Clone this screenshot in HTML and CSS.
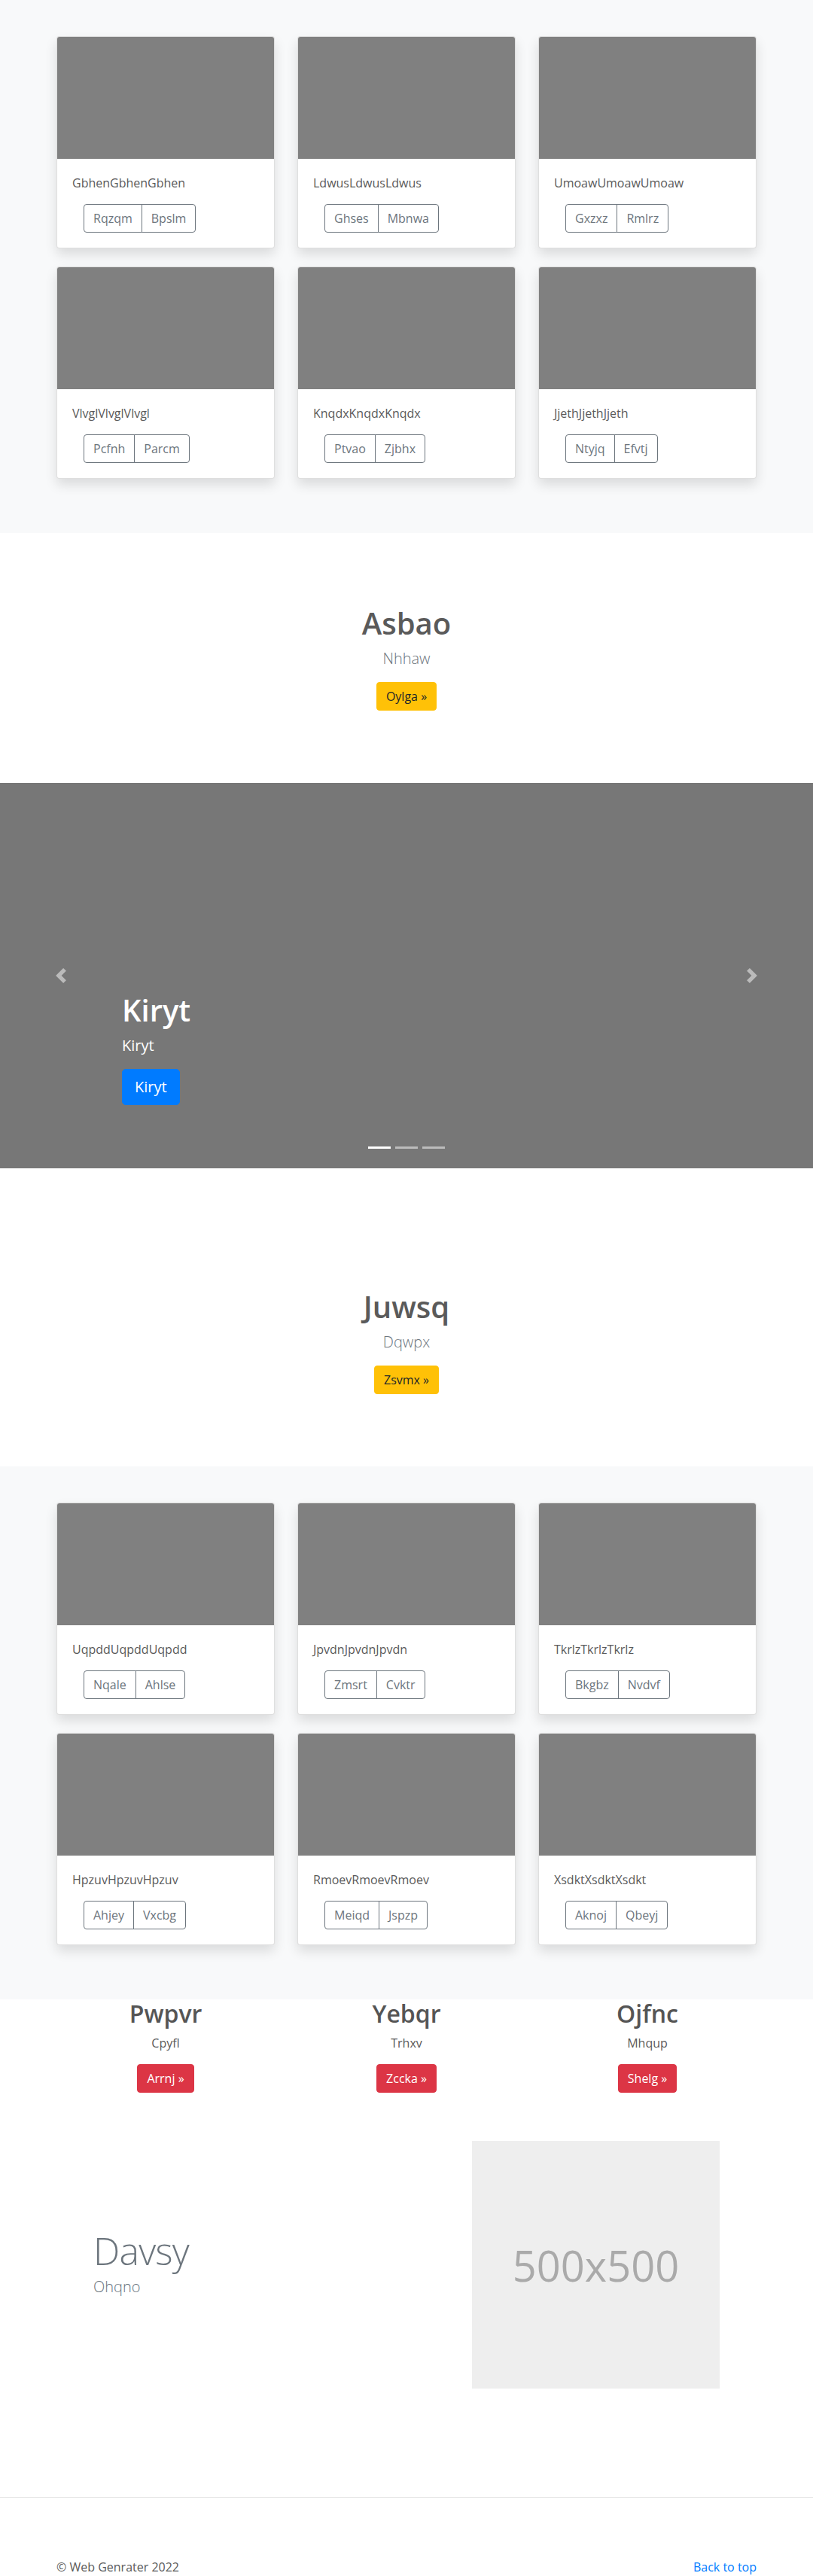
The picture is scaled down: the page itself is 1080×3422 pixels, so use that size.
FILE: index.html
```html
<!DOCTYPE html>
<html lang="en">
<head>
<meta charset="utf-8">
<title>Web Genrater</title>
<link rel="stylesheet" href="styles.css">
</head>
<body>

<section class="album">
  <div class="container card-grid">
    <div class="card"><div class="card-img"></div><div class="card-body"><p class="card-text">GbhenGbhenGbhen</p><div class="btn-group"><button class="btn btn-outline">Rqzqm</button><button class="btn btn-outline">Bpslm</button></div></div></div>
    <div class="card"><div class="card-img"></div><div class="card-body"><p class="card-text">LdwusLdwusLdwus</p><div class="btn-group"><button class="btn btn-outline">Ghses</button><button class="btn btn-outline">Mbnwa</button></div></div></div>
    <div class="card"><div class="card-img"></div><div class="card-body"><p class="card-text">UmoawUmoawUmoaw</p><div class="btn-group"><button class="btn btn-outline">Gxzxz</button><button class="btn btn-outline">Rmlrz</button></div></div></div>
    <div class="card"><div class="card-img"></div><div class="card-body"><p class="card-text">VlvglVlvglVlvgl</p><div class="btn-group"><button class="btn btn-outline">Pcfnh</button><button class="btn btn-outline">Parcm</button></div></div></div>
    <div class="card"><div class="card-img"></div><div class="card-body"><p class="card-text">KnqdxKnqdxKnqdx</p><div class="btn-group"><button class="btn btn-outline">Ptvao</button><button class="btn btn-outline">Zjbhx</button></div></div></div>
    <div class="card"><div class="card-img"></div><div class="card-body"><p class="card-text">JjethJjethJjeth</p><div class="btn-group"><button class="btn btn-outline">Ntyjq</button><button class="btn btn-outline">Efvtj</button></div></div></div>
  </div>
</section>

<section class="jumbo">
  <h1 class="jumbo-title">Asbao</h1>
  <p class="lead">Nhhaw</p>
  <a class="btn btn-warning" href="#">Oylga »</a>
</section>

<div class="carousel">
  <ol class="indicators">
    <li class="active"></li>
    <li></li>
    <li></li>
  </ol>
  <div class="caption">
    <h1 class="caption-title">Kiryt</h1>
    <p class="caption-text">Kiryt</p>
    <p class="caption-action"><a class="btn btn-lg btn-primary" href="#">Kiryt</a></p>
  </div>
  <a class="control control-prev" href="#"><svg class="control-icon" viewBox="0 0 8 8"><path fill="#fff" d="M5.25 0l-4 4 4 4 1.5-1.5L4.25 4l2.5-2.5L5.25 0z"/></svg></a>
  <a class="control control-next" href="#"><svg class="control-icon" viewBox="0 0 8 8"><path fill="#fff" d="M2.75 0l-1.5 1.5L3.75 4l-2.5 2.5L2.75 8l4-4-4-4z"/></svg></a>
</div>

<section class="jumbo">
  <h1 class="jumbo-title">Juwsq</h1>
  <p class="lead">Dqwpx</p>
  <a class="btn btn-warning" href="#">Zsvmx »</a>
</section>

<section class="album">
  <div class="container card-grid">
    <div class="card"><div class="card-img"></div><div class="card-body"><p class="card-text">UqpddUqpddUqpdd</p><div class="btn-group"><button class="btn btn-outline">Nqale</button><button class="btn btn-outline">Ahlse</button></div></div></div>
    <div class="card"><div class="card-img"></div><div class="card-body"><p class="card-text">JpvdnJpvdnJpvdn</p><div class="btn-group"><button class="btn btn-outline">Zmsrt</button><button class="btn btn-outline">Cvktr</button></div></div></div>
    <div class="card"><div class="card-img"></div><div class="card-body"><p class="card-text">TkrlzTkrlzTkrlz</p><div class="btn-group"><button class="btn btn-outline">Bkgbz</button><button class="btn btn-outline">Nvdvf</button></div></div></div>
    <div class="card"><div class="card-img"></div><div class="card-body"><p class="card-text">HpzuvHpzuvHpzuv</p><div class="btn-group"><button class="btn btn-outline">Ahjey</button><button class="btn btn-outline">Vxcbg</button></div></div></div>
    <div class="card"><div class="card-img"></div><div class="card-body"><p class="card-text">RmoevRmoevRmoev</p><div class="btn-group"><button class="btn btn-outline">Meiqd</button><button class="btn btn-outline">Jspzp</button></div></div></div>
    <div class="card"><div class="card-img"></div><div class="card-body"><p class="card-text">XsdktXsdktXsdkt</p><div class="btn-group"><button class="btn btn-outline">Aknoj</button><button class="btn btn-outline">Qbeyj</button></div></div></div>
  </div>
</section>

<section class="container features">
  <div class="feature">
    <h2 class="feature-title">Pwpvr</h2>
    <p class="feature-text">Cpyfl</p>
    <a class="btn btn-danger" href="#">Arrnj »</a>
  </div>
  <div class="feature">
    <h2 class="feature-title">Yebqr</h2>
    <p class="feature-text">Trhxv</p>
    <a class="btn btn-danger" href="#">Zccka »</a>
  </div>
  <div class="feature">
    <h2 class="feature-title">Ojfnc</h2>
    <p class="feature-text">Mhqup</p>
    <a class="btn btn-danger" href="#">Shelg »</a>
  </div>
</section>

<section class="container featurette">
  <div class="featurette-text">
    <h2 class="featurette-heading">Davsy</h2>
    <p class="featurette-lead">Ohqno</p>
  </div>
  <div class="placeholder">500x500</div>
</section>

<hr class="divider">

<footer class="container footer">
  <p class="footer-copy">© Web Genrater 2022</p>
  <a class="footer-link" href="#">Back to top</a>
</footer>

</body>
</html>
```

FILE: styles.css
```css
* { box-sizing: border-box; }

html, body {
  margin: 0;
  padding: 0;
}

body {
  font-family: "Segoe UI", "Open Sans", "Noto Sans", Arial, sans-serif;
  font-size: 16px;
  line-height: 1.5;
  color: #5a5a5a;
  background: #fff;
}

a { text-decoration: none; }

.container {
  width: 960px;
  margin: 0 auto;
  padding: 0 15px;
}

/* ---------- Album ---------- */
.album {
  background: #f8f9fa;
  padding: 48px 0;
}

.card-grid {
  display: grid;
  grid-template-columns: repeat(3, 1fr);
  column-gap: 30px;
}

.card {
  background: #fff;
  border: 1px solid rgba(0, 0, 0, 0.125);
  border-radius: 4px;
  box-shadow: 0 8px 16px rgba(0, 0, 0, 0.12);
  margin-bottom: 24px;
  overflow: hidden;
}

.card-img {
  aspect-ratio: 16 / 9;
  background: #808080;
}

.card-body {
  padding: 20px;
}

.card-text {
  margin: 0 0 16px;
  font-size: 16px;
  line-height: 24px;
  color: #5a5a5a;
}

.btn-group {
  display: inline-flex;
  margin-left: 15px;
}

.btn {
  display: inline-block;
  font-family: inherit;
  font-size: 16px;
  line-height: 24px;
  padding: 6px 12px;
  border: 1px solid transparent;
  border-radius: 4px;
  cursor: pointer;
  font-weight: 400;
}

.btn-outline {
  background: transparent;
  color: #6c757d;
  border-color: #6c757d;
}

.btn-group .btn-outline:first-child {
  border-top-right-radius: 0;
  border-bottom-right-radius: 0;
}

.btn-group .btn-outline:last-child {
  border-top-left-radius: 0;
  border-bottom-left-radius: 0;
  margin-left: -1px;
}

.btn-warning {
  background: #ffc107;
  border-color: #ffc107;
  color: #212529;
}

.btn-primary {
  background: #007bff;
  border-color: #007bff;
  color: #fff;
}

.btn-danger {
  background: #dc3545;
  border-color: #dc3545;
  color: #fff;
}

.btn-lg {
  font-size: 20px;
  line-height: 30px;
  padding: 8px 16px;
  border-radius: 5px;
}

/* ---------- Jumbo ---------- */
.jumbo {
  padding: 96px 0;
  text-align: center;
}

.jumbo-title {
  margin: 0 0 8px;
  font-size: 40px;
  line-height: 48px;
  font-weight: 600;
  color: #5a5a5a;
}

.lead {
  margin: 0 0 16px;
  font-size: 20px;
  line-height: 30px;
  font-weight: 300;
  color: #6c757d;
}

/* ---------- Carousel ---------- */
.carousel {
  position: relative;
  height: 512px;
  background: #777;
  margin-bottom: 64px;
}

.caption {
  position: absolute;
  left: 15%;
  right: 15%;
  bottom: 48px;
  padding: 20px 0;
  color: #fff;
  z-index: 2;
}

.caption-title {
  margin: 0 0 8px;
  font-size: 40px;
  line-height: 48px;
  font-weight: 600;
}

.caption-text {
  margin: 0 0 16px;
  font-size: 20px;
  line-height: 30px;
}

.caption-action {
  margin: 0 0 16px;
}

.control {
  position: absolute;
  top: 0;
  bottom: 0;
  width: 15%;
  display: flex;
  align-items: center;
  justify-content: center;
  opacity: 0.5;
}

.control-prev { left: 0; }
.control-next { right: 0; }

.control-icon {
  width: 20px;
  height: 20px;
}

.indicators {
  position: absolute;
  left: 0;
  right: 0;
  bottom: 0;
  margin: 0 0 16px;
  padding: 0;
  list-style: none;
  display: flex;
  justify-content: center;
  z-index: 3;
}

.indicators li {
  width: 30px;
  height: 3px;
  margin: 0 3px;
  box-sizing: content-box;
  border-top: 10px solid transparent;
  border-bottom: 10px solid transparent;
  background: #fff;
  background-clip: padding-box;
  opacity: 0.5;
}

.indicators li.active { opacity: 1; }

/* ---------- Features ---------- */
.features {
  display: grid;
  grid-template-columns: repeat(3, 1fr);
  column-gap: 30px;
  text-align: center;
  margin-bottom: 64px;
}

.feature-title {
  margin: 0 0 8px;
  font-size: 32px;
  line-height: 38px;
  font-weight: 600;
  color: #555;
}

.feature-text {
  margin: 0 0 16px;
  color: #5a5a5a;
}

/* ---------- Featurette ---------- */
.featurette {
  display: grid;
  grid-template-columns: 1fr 329px;
  align-items: center;
  padding: 0 64px;
}

.featurette-heading {
  margin: 0 0 8px;
  font-size: 50px;
  line-height: 1;
  font-weight: 300;
  letter-spacing: -0.8px;
  color: #6c757d;
}

.featurette-lead {
  margin: 0;
  font-size: 20px;
  line-height: 30px;
  font-weight: 300;
  color: #6c757d;
}

.placeholder {
  width: 329px;
  height: 329px;
  background: #eee;
  color: #aaa;
  font-size: 56px;
  display: flex;
  align-items: center;
  justify-content: center;
}

.divider {
  margin: 144px 0 80px;
  border: 0;
  border-top: 1px solid #e5e5e5;
  height: 0;
}

/* ---------- Footer ---------- */
.footer {
  display: flex;
  justify-content: space-between;
  align-items: baseline;
}

.footer-copy {
  margin: 0;
  color: #5a5a5a;
}

.footer-link {
  color: #007bff;
}
```
